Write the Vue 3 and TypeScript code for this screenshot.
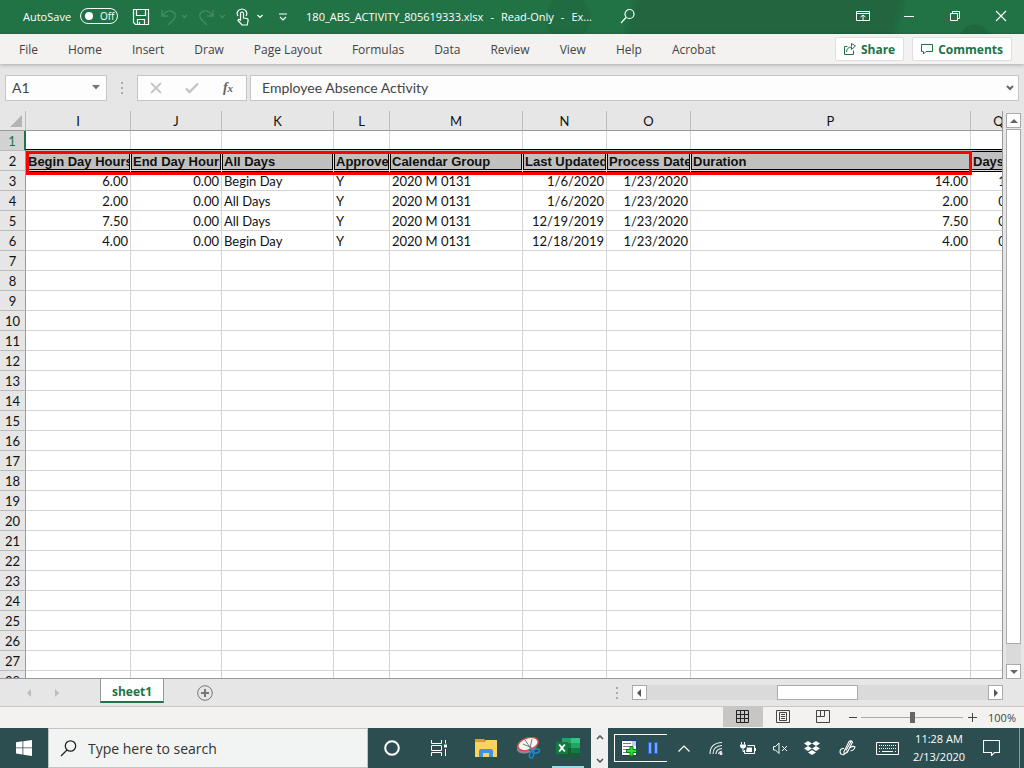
<script setup lang="ts">
import { ref } from 'vue'

interface Column {
  letter: string
  width: number
  title: string
  align: 'left' | 'right'
}

const columns: Column[] = [
  { letter: 'I', width: 105, title: 'Begin Day Hours', align: 'right' },
  { letter: 'J', width: 91, title: 'End Day Hours', align: 'right' },
  { letter: 'K', width: 112, title: 'All Days', align: 'left' },
  { letter: 'L', width: 56, title: 'Approved', align: 'left' },
  { letter: 'M', width: 133, title: 'Calendar Group', align: 'left' },
  { letter: 'N', width: 84, title: 'Last Updated', align: 'right' },
  { letter: 'O', width: 84, title: 'Process Date', align: 'right' },
  { letter: 'P', width: 280, title: 'Duration', align: 'right' },
  { letter: 'Q', width: 56, title: 'Days', align: 'right' },
]

const rows: string[][] = [
  ['6.00', '0.00', 'Begin Day', 'Y', '2020 M 0131', '1/6/2020', '1/23/2020', '14.00', '1.75'],
  ['2.00', '0.00', 'All Days', 'Y', '2020 M 0131', '1/6/2020', '1/23/2020', '2.00', '0.25'],
  ['7.50', '0.00', 'All Days', 'Y', '2020 M 0131', '12/19/2019', '1/23/2020', '7.50', '0.94'],
  ['4.00', '0.00', 'Begin Day', 'Y', '2020 M 0131', '12/18/2019', '1/23/2020', '4.00', '0.50'],
]

const emptyRows = Array.from({ length: 22 }, (_, i) => i + 7)
const tabs = ['File', 'Home', 'Insert', 'Draw', 'Page Layout', 'Formulas', 'Data', 'Review', 'View', 'Help', 'Acrobat']

const autoSave = ref(false)
const cellName = ref('A1')
const formula = ref('Employee Absence Activity')
const zoom = ref(50)
</script>

<template>
  <div class="screen">
    <header class="titlebar">
      <label class="autosave">
        <span>AutoSave</span>
        <input v-model="autoSave" type="checkbox" />
        <span class="switch"><i></i><span>{{ autoSave ? 'On' : 'Off' }}</span></span>
      </label>
      <div class="quick">
        <button type="button" aria-label="Save">
          <svg width="18" height="18" viewBox="0 0 18 18" fill="none" stroke="#fff" stroke-width="1.2"><path d="M1.5 1.5h15v15h-13l-2-2zM4.500 1.500v6h9v-6M5.500 16.500v-5h7v5M7.500 14v2.500" /></svg>
        </button>
        <button type="button" class="dim" aria-label="Undo">
          <svg width="28" height="18" viewBox="0 0 28 18" fill="none" stroke="#448a63" stroke-width="1.400"><path d="M2 2v6h6M2 8C5 4 8 2.500 11 3c5 1 5 6 3 8l-6 6M22 7l2.500 2.500L27 7" /></svg>
        </button>
        <button type="button" class="dim" aria-label="Redo">
          <svg width="28" height="18" viewBox="0 0 28 18" fill="none" stroke="#448a63" stroke-width="1.400"><path d="M15 2v6H9M15 8C12 4 9 2.500 6 3 1 4 1 9 3 11l6 6M22 7l2.500 2.500L27 7" /></svg>
        </button>
        <button type="button" aria-label="Touch/Mouse Mode">
          <svg width="28" height="18" viewBox="0 0 28 18" fill="none" stroke="#fff" stroke-width="1.200"><path d="M2 8C0 5 2 1 6 1s6 4 4 7M4.500 11V5q1.500-2 3 0v5l3.500.5q1.500.5 1 2.500l-.8 4H6L2 12.500q.5-2 2.500-.5zM21.500 7l2.500 2.500L26.500 7" /></svg>
        </button>
        <button type="button" aria-label="Customize Quick Access Toolbar">
          <svg width="10" height="8" viewBox="0 0 10 8" fill="none" stroke="#fff" stroke-width="1.200"><path d="M1 1h8M2 4l3 3 3-3" /></svg>
        </button>
      </div>
      <h1><span>180_ABS_ACTIVITY_805619333.xlsx</span><span>-</span><span>Read-Only</span><span>-</span><span>Ex...</span></h1>
      <button type="button" class="find" aria-label="Search">
        <svg width="16" height="16" viewBox="0 0 16 16" fill="none" stroke="#fff" stroke-width="1.200"><circle cx="9.500" cy="6" r="4.500" /><path d="M6 9.500L1 15" /></svg>
      </button>
      <div class="window">
        <button type="button" aria-label="Ribbon Display Options">
          <svg width="14" height="12" viewBox="0 0 14 12" fill="none" stroke="#fff"><path d="M.5 1.500h13v9H.5zM.5 3.500h13M7 10V5M4.500 7L7 5l2.500 2" /></svg>
        </button>
        <button type="button" aria-label="Minimize">
          <svg width="12" height="12" viewBox="0 0 12 12" stroke="#fff"><path d="M1 6.500h10" /></svg>
        </button>
        <button type="button" aria-label="Restore">
          <svg width="12" height="12" viewBox="0 0 12 12" fill="none" stroke="#fff"><path d="M1.500 3.500h7v7h-7zM3.500 3V1.500h7v7H9" /></svg>
        </button>
        <button type="button" aria-label="Close">
          <svg width="12" height="12" viewBox="0 0 12 12" stroke="#fff" stroke-width="1.200"><path d="M1 1l10 10M11 1L1 11" /></svg>
        </button>
      </div>
    </header>

    <nav class="ribbon">
      <button v-for="t in tabs" :key="t" type="button" class="tab">{{ t }}</button>
      <div class="actions">
        <button type="button">
          <svg width="12" height="12" viewBox="0 0 12 12" fill="none" stroke="#217346"><path d="M3.500 3.500h-3v8h9v-4M2.500 9q.5-5 5-5V6.500L11.500 3 7.500.5v3" /></svg>
          <span>Share</span>
        </button>
        <button type="button">
          <svg width="12" height="12" viewBox="0 0 12 12" fill="none" stroke="#217346"><path d="M.5 1.500h11v7H5L2.500 11V8.500h-2z" /></svg>
          <span>Comments</span>
        </button>
      </div>
    </nav>

    <section class="formula">
      <div class="box name">
        <input v-model="cellName" aria-label="Name Box" />
        <svg width="8" height="5" viewBox="0 0 8 5" fill="#777"><path d="M0 0h8L4 4.500z" /></svg>
      </div>
      <span class="dots"><i></i><i></i><i></i></span>
      <div class="box fx">
        <button type="button" aria-label="Cancel">
          <svg width="12" height="12" viewBox="0 0 12 12" stroke="#c4c4c4" stroke-width="1.800"><path d="M1 1l10 10M11 1L1 11" /></svg>
        </button>
        <button type="button" aria-label="Enter">
          <svg width="14" height="12" viewBox="0 0 14 12" fill="none" stroke="#c4c4c4" stroke-width="2.400"><path d="M1 6.500L4.500 10 13 1.500" /></svg>
        </button>
        <button type="button" aria-label="Insert Function"><em>f<small>x</small></em></button>
      </div>
      <div class="box entry">
        <input v-model="formula" aria-label="Formula Bar" />
        <svg width="8" height="6" viewBox="0 0 8 6" fill="none" stroke="#666" stroke-width="2"><path d="M1 1l3 3 3-3" /></svg>
      </div>
    </section>

    <main class="work">
      <div class="sheet">
        <table>
          <colgroup>
            <col class="rowcol" />
            <col v-for="c in columns" :key="c.letter" :style="{ width: c.width + 'px' }" />
          </colgroup>
          <thead>
            <tr>
              <th class="corner"><svg width="12" height="12" viewBox="0 0 12 12"><path d="M12 0v12H0z" fill="#b4b4b4" /></svg></th>
              <th v-for="c in columns" :key="c.letter" class="letter" scope="col">{{ c.letter }}</th>
            </tr>
          </thead>
          <tbody>
            <tr>
              <th class="num active" scope="row">1</th>
              <td v-for="c in columns" :key="c.letter"></td>
            </tr>
            <tr>
              <th class="num" scope="row">2</th>
              <th v-for="c in columns" :key="c.letter" class="title" scope="col">{{ c.title }}</th>
            </tr>
            <tr v-for="(r, i) in rows" :key="i">
              <th class="num" scope="row">{{ i + 3 }}</th>
              <td v-for="(v, j) in r" :key="j" :class="columns[j].align">{{ v }}</td>
            </tr>
            <tr v-for="n in emptyRows" :key="n">
              <th class="num" scope="row">{{ n }}</th>
              <td v-for="c in columns" :key="c.letter"></td>
            </tr>
          </tbody>
        </table>
        <div class="highlight"></div>
      </div>
      <div class="vscroll">
        <button type="button" aria-label="Scroll up"><svg width="8" height="4" viewBox="0 0 8 4" fill="#666"><path d="M0 4h8L4 0z" /></svg></button>
        <div class="thumb"></div>
        <div class="rest"></div>
        <button type="button" aria-label="Scroll down"><svg width="8" height="4" viewBox="0 0 8 4" fill="#666"><path d="M0 0h8L4 4z" /></svg></button>
      </div>
    </main>

    <section class="sheets">
      <div class="arrows">
        <button type="button" aria-label="Previous sheet"><svg width="4" height="8" viewBox="0 0 4 8" fill="#bbb"><path d="M4 0v8L0 4z" /></svg></button>
        <button type="button" aria-label="Next sheet"><svg width="4" height="8" viewBox="0 0 4 8" fill="#bbb"><path d="M0 0v8l4-4z" /></svg></button>
      </div>
      <button type="button" class="sheettab">sheet1</button>
      <button type="button" class="add" aria-label="New sheet">
        <svg width="16" height="16" viewBox="0 0 16 16" fill="none" stroke="#777"><circle cx="8" cy="8" r="7.300" /><path d="M4 8h8M8 4v8" stroke-width="2" /></svg>
      </button>
      <span class="dots"><i></i><i></i><i></i></span>
      <div class="hscroll">
        <button type="button" aria-label="Scroll left"><svg width="4" height="8" viewBox="0 0 4 8" fill="#555"><path d="M4 0v8L0 4z" /></svg></button>
        <div class="track"><div class="thumb"></div></div>
        <button type="button" aria-label="Scroll right"><svg width="4" height="8" viewBox="0 0 4 8" fill="#555"><path d="M0 0v8l4-4z" /></svg></button>
      </div>
    </section>

    <footer class="status">
      <button type="button" class="view on" aria-label="Normal">
        <svg width="14" height="14" viewBox="0 0 14 14" fill="none" stroke="#222"><path d="M.5.5h12v12H.5zM4.500.5v12M8.500.5v12M.5 4.500h12M.5 8.500h12" /></svg>
      </button>
      <button type="button" class="view" aria-label="Page Layout">
        <svg width="14" height="14" viewBox="0 0 14 14" fill="none" stroke="#444"><path d="M.5.5h13v12H.5zM3.500 2.500h7v8h-7zM5 4.500h4M5 6.500h4M5 8.500h4" /></svg>
      </button>
      <button type="button" class="view" aria-label="Page Break Preview">
        <svg width="14" height="14" viewBox="0 0 14 14" fill="none" stroke="#444"><path d="M.5.5h13v12H.5zM4.500.5v6M8.500.5v6M.5 6.500h8" /></svg>
      </button>
      <button type="button" class="step" aria-label="Zoom out"><svg width="9" height="9" viewBox="0 0 9 9" stroke="#444"><path d="M1 4.500h8" /></svg></button>
      <input v-model="zoom" type="range" min="0" max="100" aria-label="Zoom" />
      <button type="button" class="step" aria-label="Zoom in"><svg width="9" height="9" viewBox="0 0 9 9" stroke="#444"><path d="M0 4.500h9M4.500 0v9" /></svg></button>
      <span class="percent">100%</span>
    </footer>

    <footer class="taskbar">
      <button type="button" class="start" aria-label="Start">
        <svg width="16" height="16" viewBox="0 0 16 16" fill="#fff"><path d="M0 2.200l6.500-.9v6.200H0zM7.300 1.200L16 0v7.500H7.300zM0 8.300h6.500v6.200L0 13.600zM7.300 8.300H16V16l-8.700-1.300z" /></svg>
      </button>
      <label class="search">
        <svg width="17" height="17" viewBox="0 0 17 17" fill="none" stroke="#222" stroke-width="1.300"><circle cx="10.500" cy="6" r="5.200" /><path d="M7 10L1 16" /></svg>
        <input type="text" placeholder="Type here to search" aria-label="Search" />
      </label>
      <div class="apps">
        <button type="button" aria-label="Cortana">
          <svg width="16" height="16" viewBox="0 0 16 16" fill="none" stroke="#fff" stroke-width="2"><circle cx="8" cy="8" r="6.800" /></svg>
        </button>
        <button type="button" aria-label="Task View">
          <svg width="18" height="16" viewBox="0 0 18 16" fill="none" stroke="#fff"><path d="M1.500 0v3.500h10V0M1.500 5.500h10v5h-10zM1.500 16v-3.500h10V16M15.500 0v3.500M15.500 9v7" /><path d="M14 4.500h3v3h-3z" fill="#fff" stroke="none" /></svg>
        </button>
        <button type="button" aria-label="File Explorer">
          <svg width="22" height="18" viewBox="0 0 22 18"><path d="M0 0h9l2 2h-2v3H0z" fill="#dca01c" /><path d="M0 3h9l2-2h11v17H0z" fill="#fbd35c" /><path d="M4 18v-6q0-2 2-2h10q2 0 2 2v6h-4v-4H8v4z" fill="#3c96dc" /></svg>
        </button>
        <button type="button" aria-label="Snipping Tool">
          <svg width="24" height="22" viewBox="0 0 24 22" fill="none"><ellipse cx="11" cy="10" rx="10.500" ry="6" transform="rotate(-18 11 10)" fill="#858b8c" /><ellipse cx="12" cy="7" rx="10.500" ry="6" transform="rotate(-18 12 7)" fill="#f5f5f5" stroke="#d84a46" stroke-width="1.400" /><path d="M9 3l7 10M16 2l-2 9M7 7l9 4" stroke="#777" /><path d="M13 12l4 3" stroke="#197cc0" stroke-width="2" /><ellipse cx="15.500" cy="18" rx="2" ry="3" stroke="#198bd0" stroke-width="1.500" transform="rotate(15 15.500 18)" /><ellipse cx="20.500" cy="14" rx="3" ry="2" stroke="#198bd0" stroke-width="1.500" transform="rotate(-15 20.500 14)" /></svg>
        </button>
        <button type="button" class="running" aria-label="Excel">
          <svg width="24" height="22" viewBox="0 0 24 22"><path d="M6 1h9v5H6z" fill="#21a366" /><path d="M15 1h9v5h-9z" fill="#33c481" /><path d="M6 6h9v5H6z" fill="#107c41" /><path d="M15 6h9v5h-9z" fill="#21a366" /><path d="M6 11h9v5H6z" fill="#185c37" /><path d="M15 11h9v5h-9z" fill="#107c41" /><path d="M6 16h18v5H6z" fill="#185c37" /><path d="M0 5h12v12H0z" fill="#107c41" /><path d="M3.200 7.500l5.600 7M8.800 7.500l-5.600 7" stroke="#fff" stroke-width="1.800" /></svg>
        </button>
      </div>
      <div class="pager">
        <svg width="8" height="5" viewBox="0 0 8 5" fill="none" stroke="#555" stroke-width="1.600"><path d="M1 4l3-3 3 3" /></svg>
        <svg width="8" height="5" viewBox="0 0 8 5" fill="none" stroke="#555" stroke-width="1.600"><path d="M1 1l3 3 3-3" /></svg>
      </div>
      <div class="recorder">
        <button type="button" aria-label="Add note">
          <svg width="17" height="17" viewBox="0 0 17 17"><path d="M.5.500h15v15H.5z" fill="#fff" stroke="#123a78" /><path d="M2 3.500h8M2 6.500h8M2 9.500h5M2 12.500h5" stroke="#7577a8" stroke-width="1.200" /><path d="M11 1h4v5h-4z" fill="#c7cbe8" /><path d="M9 6.500h3v3h3.500v3H12V16H9v-3.500H5.500v-3H9z" fill="#2be032" stroke="#087a12" /></svg>
        </button>
        <button type="button" aria-label="Pause">
          <svg width="10" height="12" viewBox="0 0 10 12"><path d="M.5.5h3v11h-3zM6.500.5h3v11h-3z" fill="#78a7f8" stroke="#2c60d8" /></svg>
        </button>
      </div>
      <div class="tray">
        <button type="button" aria-label="Show hidden icons"><svg width="12" height="7" viewBox="0 0 12 7" fill="none" stroke="#fff" stroke-width="1.200"><path d="M.5 6.500L6 1l5.500 5.500" /></svg></button>
        <button type="button" aria-label="Network"><svg width="14" height="14" viewBox="0 0 14 14" fill="none" stroke="#e8eeee" stroke-width="1.100"><path d="M1 13Q1 2 13 1.500M4 13Q4 5 13 4.500M7 13Q7 8 13 7.500M9.500 13q.5-2.500 3.500-3" /><circle cx="12" cy="12.500" r="1" fill="#fff" /></svg></button>
        <button type="button" aria-label="Battery"><svg width="16" height="13" viewBox="0 0 16 13" fill="none" stroke="#fff"><path d="M4.500 8v3.500h10v-8h-7M15.500 6v3M1.500 0v2.500M4.500 0v2.500M3 6v3.500h1.500" /><path d="M0 2.500h6v2Q5.500 6.500 3 6.500T0 4.500zM7 5.500h5v4.500H6z" fill="#fff" stroke="none" /></svg></button>
        <button type="button" aria-label="Muted"><svg width="15" height="12" viewBox="0 0 15 12" fill="none" stroke="#fff"><path d="M.5 4.500h2L6 1v10.500L2.500 8h-2zM9 4l5 5M14 4L9 9" /></svg></button>
        <button type="button" aria-label="Dropbox"><svg width="16" height="14" viewBox="0 0 16 14" fill="#fff"><path d="M4 0l4 2.500L4 5 0 2.500zM12 0l4 2.500L12 5 8 2.500zM4 5l4 2.500L4 10 0 7.500zM12 5l4 2.500-4 2.500-4-2.500zM8 9l4 2.500L8 14l-4-2.500z" /></svg></button>
        <button type="button" class="ink" aria-label="Ink Workspace"><svg width="17" height="16" viewBox="0 0 17 16" fill="none" stroke="#fff" stroke-width="1.100"><path d="M5 8.500Q1 8 1 12q1 3.500 4 2.500 2-1 4-4M5 11.500L10 1.500q2-1.500 3.500.5L8.500 12 5 14zM7 10.500l5-9M11 7.500q3.500-2 5-.5-.5 3-4.500 4" /></svg></button>
        <button type="button" class="keys" aria-label="Touch keyboard"><svg width="23" height="13" viewBox="0 0 23 13" fill="none" stroke="#fff"><path d="M.5.500h22v12H.5z" /><path d="M3 3.500h17M3 6.500h17" stroke-dasharray="1 1" /><path d="M3 9.500h1M6 9.500h11M19 9.500h1" /></svg></button>
        <div class="clock"><span>11:28 AM</span><span>2/13/2020</span></div>
        <button type="button" aria-label="Notifications"><svg width="17" height="16" viewBox="0 0 17 16" fill="none" stroke="#fff" stroke-width="1.100"><path d="M.5.500h16v12h-5l-3 3v-3h-8z" /></svg></button>
        <span class="peek"></span>
      </div>
    </footer>
  </div>
</template>

<style>
html, body { margin: 0; overflow: hidden; }
</style>

<style scoped>
.screen { display: flex; flex-direction: column; height: 100vh; overflow: hidden; background: #e6e6e6; font-family: "Open Sans", "Noto Sans", sans-serif; color: #444; }
* { box-sizing: border-box; }
button { display: flex; align-items: center; justify-content: center; flex: none; margin: 0; padding: 0; border: 0; background: none; color: inherit; font: inherit; }
input { min-width: 0; margin: 0; padding: 0; border: 0; outline: 0; background: none; color: inherit; font: inherit; }
svg { flex: none; display: block; }

.titlebar { display: flex; align-items: center; flex: none; height: 34px; padding: 0 0 2px 23px; color: #fff; font-size: 11px; background: radial-gradient(circle at 568px 18px, #206b42 22px, transparent 23px), radial-gradient(circle at 975px 40px, #20673f 15px, transparent 16px), linear-gradient(105deg, #217346 61%, #22653f 62%, #22653f 87%, #217346 88%); }
.autosave { display: flex; align-items: center; gap: 9px; }
.autosave input { position: absolute; opacity: 0; }
.switch { display: flex; align-items: center; gap: 7px; width: 38px; height: 16px; padding-left: 4px; border: 1px solid #fff; border-radius: 8px; font-size: 10px; }
.switch i { width: 8px; height: 8px; border-radius: 50%; background: #fff; }
.quick { display: flex; align-items: center; gap: 10px; margin-left: 14px; padding-top: 2px; }
.quick button:last-child { margin-left: 4px; }
h1 { display: flex; gap: 7px; margin: 0 0 0 18px; font-size: 11px; font-weight: 400; white-space: nowrap; }
.find { margin-left: 28px; }
.window { display: flex; margin-left: auto; }
.window button { width: 46px; height: 32px; }

.ribbon { display: flex; align-items: center; flex: none; height: 30px; padding: 0 12px 0 4px; background: #f3f2f1; font-size: 12px; box-shadow: 0 1px 4px #0004; }
.tab { height: 30px; padding: 0 15px; white-space: nowrap; }
.actions { display: flex; gap: 8px; margin-left: auto; }
.actions button { gap: 5px; height: 24px; padding: 0 8px; border: 1px solid #e1dfdd; border-radius: 2px; background: #fff; color: #217346; font-weight: 700; }

.formula { display: flex; align-items: center; flex: none; height: 47px; padding: 0 5px; font-family: Lato, sans-serif; font-size: 14px; }
.box { display: flex; align-items: center; height: 26px; border: 1px solid #c6c6c6; background: #fdfdfd; }
.name { width: 102px; padding: 0 6px; }
.name input, .entry input { flex: 1; }
.dots { display: flex; flex-direction: column; align-items: center; gap: 3px; width: 30px; }
.dots i { width: 2px; height: 2px; background: #aaa; }
.fx { justify-content: space-around; width: 110px; }
.fx button { width: 36px; }
.fx em { color: #666; font-family: "Liberation Serif", serif; font-size: 14px; font-weight: 700; line-height: 16px; }
.fx small { font-size: 11px; }
.entry { flex: 1; margin-left: 3px; padding: 0 4px 0 11px; }

.work { display: flex; flex: 1; min-height: 0; }
.sheet { position: relative; flex: 1; min-width: 0; overflow: hidden; border-right: 1px solid #999; border-bottom: 1px solid #999; background: #fff; }
table { width: 1027px; table-layout: fixed; border-collapse: separate; border-spacing: 0; color: #111; font-family: Lato, sans-serif; font-size: 13px; }
.rowcol { width: 26px; }
th, td { height: 20px; padding: 2px 2px 0; border-right: 1px solid #d4d4d4; border-bottom: 1px solid #d4d4d4; line-height: 17px; overflow: hidden; white-space: nowrap; font-weight: 400; }
.left { text-align: left; }
.right { text-align: right; }
.corner, .letter, .num { border-color: #999; background: #e6e6e6; }
.letter { border-right-color: #bbb; }
.corner { padding: 0 3px; border-right-color: #bbb; }
.corner svg { margin-left: auto; }
.num { border-bottom-color: #bbb; }
.active { border-right: 2px solid #217346; background: #d2d2d2; color: #217346; }
.title { border-color: #ddd; background: #c0c0c0; font-family: "Liberation Sans", Arial, sans-serif; font-weight: 700; text-align: left; box-shadow: inset 0 1px #000, inset 0 -1px #000, inset 1px 0 #000, inset -1px 0 #000, 0 1px #000, 0 -1px #c0c0c0, 0 -2px #000; }
.highlight { position: absolute; left: 26px; top: 40px; width: 946px; height: 24px; border: 3px solid #f00; }
.vscroll { display: flex; flex-direction: column; width: 21px; padding: 2px 3px 0; }
.vscroll button, .hscroll button { width: 15px; height: 15px; border: 1px solid #ababab; background: #fff; }
.vscroll .thumb { flex: 1; margin-top: 1px; border: 1px solid #ababab; background: #fff; }
.vscroll .rest { height: 20px; background: #dadada; }

.sheets { display: flex; align-items: center; flex: none; height: 28px; padding-right: 21px; border-bottom: 1px solid #c6c6c6; }
.arrows { display: flex; justify-content: center; gap: 24px; width: 100px; padding-right: 14px; }
.sheettab { align-self: flex-start; width: 64px; height: 24px; padding-top: 2px; border: solid #999; border-width: 0 1px; border-bottom: 2px solid #217346; background: #fff; color: #217346; font-size: 12px; font-weight: 700; }
.add { margin-left: 33px; }
.sheets .dots { margin-left: auto; }
.hscroll { display: flex; flex: 0 0 37%; }
.track { display: flex; flex: 1; justify-content: center; background: #dadada; }
.track .thumb { width: 81px; border: 1px solid #ababab; background: #fff; }

.status { display: flex; align-items: center; justify-content: flex-end; flex: none; height: 21px; padding: 0 8px 1px 0; background: #f3f2f1; font-size: 11px; }
.view { width: 40px; height: 20px; }
.on { background: #c8c6c4; }
.step { width: 18px; height: 20px; }
.status input { width: 102px; height: 12px; appearance: none; background: linear-gradient(#aaa, #aaa) center / 100% 1px no-repeat; }
.status input::-webkit-slider-thumb { width: 5px; height: 11px; appearance: none; background: #666; }
.percent { margin-left: 7px; font-size: 11px; }

.taskbar { display: flex; flex: none; height: 40px; background: #2c4e50; color: #fff; }
.start { width: 48px; }
.search { display: flex; align-items: center; gap: 11px; flex: 0 1 320px; padding-left: 11px; border: 1px solid #bfc4c4; background: #f2f4f4; color: #333; font-size: 14px; }
.search input { flex: 1; }
.search input::placeholder { color: #333; opacity: 1; }
.apps { display: flex; padding-left: 8px; }
.apps button { width: 32px; margin-right: 15px; }
.apps button:nth-child(3) { margin-right: 10px; }
.apps button:nth-child(4) { margin-right: 8px; }
.apps .running { margin-right: 7px; border-bottom: 2px solid #8fe0e8; border-top: 2px solid transparent; }
.pager { display: flex; flex-direction: column; align-items: center; justify-content: space-between; width: 17px; padding: 7px 0 5px; background: #f0f0f0; }
.recorder { display: flex; align-items: center; gap: 10px; width: 53px; height: 28px; margin: 6px 0 0 6px; padding-left: 6px; border: 1px solid #fff; border-right: 0; }
.tray { display: flex; flex: 1; align-items: center; justify-content: flex-end; }
.tray button { width: 32px; height: 40px; }
.tray .ink { width: 38px; }
.tray .keys { width: 42px; }
.clock { display: flex; flex-direction: column; align-items: center; width: 62px; margin-right: 5px; font-size: 11px; line-height: 18px; white-space: nowrap; }
.peek { align-self: stretch; width: 5px; margin-left: 12px; border-left: 1px solid #83999a; }
</style>
